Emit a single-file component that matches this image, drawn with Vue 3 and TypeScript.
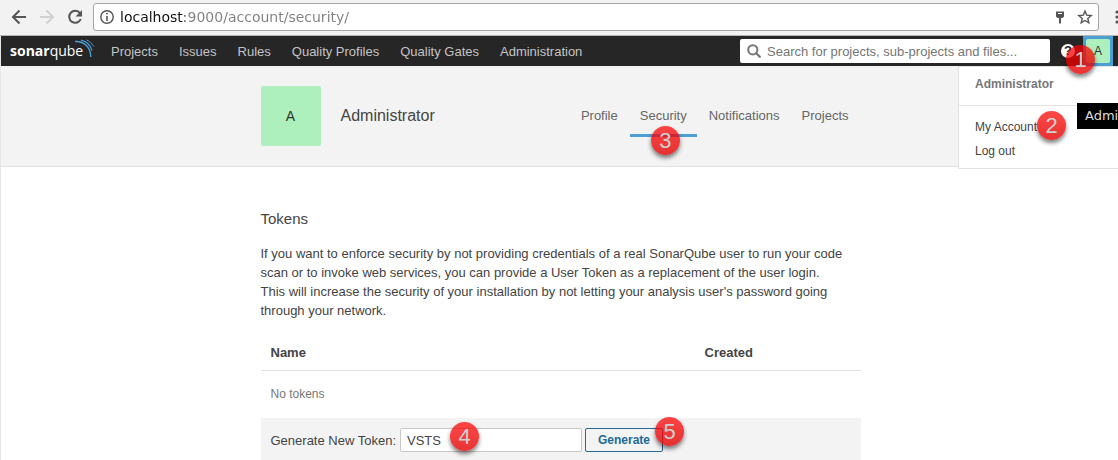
<script setup lang="ts">
import { ref } from 'vue'

interface NavLink {
  label: string
  href: string
}

const mainLinks: NavLink[] = [
  { label: 'Projects', href: '#projects' },
  { label: 'Issues', href: '#issues' },
  { label: 'Rules', href: '#rules' },
  { label: 'Quality Profiles', href: '#profiles' },
  { label: 'Quality Gates', href: '#gates' },
  { label: 'Administration', href: '#administration' },
]

const tabs: NavLink[] = [
  { label: 'Profile', href: '#profile' },
  { label: 'Security', href: '#security' },
  { label: 'Notifications', href: '#notifications' },
  { label: 'Projects', href: '#my-projects' },
]

const activeTab = ref('Security')
const address = ref('localhost:9000/account/security/')
const search = ref('')
const tokenName = ref('VSTS')
</script>

<template>
  <div class="window">
    <div class="toolbar">
      <button class="tool" type="button" aria-label="Back">
        <svg width="16" height="16" viewBox="0 0 16 16"><path d="M15 8H2M8.500 1.500L2 8l6.500 6.500" fill="none" stroke="#555" stroke-width="2" /></svg>
      </button>
      <button class="tool" type="button" aria-label="Forward" disabled>
        <svg width="16" height="16" viewBox="0 0 16 16"><path d="M1 8h13M7.500 1.500L14 8l-6.500 6.500" fill="none" stroke="#d0d0d0" stroke-width="2" /></svg>
      </button>
      <button class="tool" type="button" aria-label="Reload">
        <svg width="16" height="16" viewBox="0 0 16 16"><path d="M13 4.200A6 6 0 1 0 13.800 10" fill="none" stroke="#555" stroke-width="2" /><path d="M15 1v6.500H8.500z" fill="#555" /></svg>
      </button>
      <div class="address">
        <svg width="14" height="14" viewBox="0 0 14 14"><circle cx="7" cy="7" r="6.200" fill="none" stroke="#555" stroke-width="1.400" /><path d="M6.200 3h1.600v1.600H6.200zM6.200 6h1.600v5H6.200z" fill="#555" /></svg>
        <input v-model="address" class="url" type="text" aria-label="Address" />
        <button class="tool" type="button" aria-label="Saved passwords">
          <svg width="16" height="16" viewBox="0 0 16 16"><path d="M4 2.500h8v5L10.500 9H9v5.500H7V9H5.500L4 7.500z" fill="#555" /><path d="M6 4h4v1H6z" fill="#fff" /></svg>
        </button>
        <button class="tool" type="button" aria-label="Bookmark">
          <svg width="16" height="16" viewBox="0 0 16 16"><path d="M8 2l1.700 4.100 4.500.4-3.400 2.900 1 4.400L8 11.500l-3.800 2.300 1-4.400-3.400-2.900 4.500-.4z" fill="none" stroke="#555" stroke-width="1.400" /></svg>
        </button>
      </div>
      <button class="more" type="button" aria-label="Menu">
        <svg width="4" height="16" viewBox="0 0 4 16"><circle cx="2" cy="3" r="1.600" fill="#555" /><circle cx="2" cy="8" r="1.600" fill="#555" /><circle cx="2" cy="13" r="1.600" fill="#555" /></svg>
      </button>
    </div>

    <div class="page">
      <header class="topbar">
        <a class="logo" href="#home" aria-label="sonarqube">
          <span class="logo-text"><b>sonar</b>qube</span>
          <svg class="waves" width="20" height="20" viewBox="0 0 20 20"><g fill="none" stroke="#4b9fd5"><path d="M0 2.500C9 2 15.500 8 15.800 18" stroke-width="1.400" /><path d="M6 1.200c5.500 1.300 9.500 5 11 10.300" stroke-width="1.200" /><path d="M11.500.8c3 1.500 5.500 3.700 7.200 6.600" stroke-width="1" /></g></svg>
        </a>
        <nav class="main-nav">
          <a v-for="link in mainLinks" :key="link.label" :href="link.href">{{ link.label }}</a>
        </nav>
        <label class="search">
          <svg width="14" height="14" viewBox="0 0 14 14"><circle cx="5.800" cy="5.800" r="4.600" fill="none" stroke="#777" stroke-width="2" /><path d="M9.200 9.200l3.600 3.600" stroke="#777" stroke-width="2.200" stroke-linecap="round" /></svg>
          <input v-model="search" type="search" aria-label="Search" placeholder="Search for projects, sub-projects and files..." />
        </label>
        <button class="help" type="button" aria-label="Help">?</button>
        <div class="account">
          <button class="account-toggle" type="button"><span>A</span></button>
          <span class="badge badge-1">1</span>
          <div class="menu">
            <div class="menu-title">Administrator</div>
            <div class="menu-links">
              <a href="#account">My Account</a>
              <a href="#logout">Log out</a>
            </div>
            <span class="tooltip">Administrator</span>
            <span class="badge badge-2">2</span>
          </div>
        </div>
      </header>

      <section class="profile">
        <div class="container profile-row">
          <div class="avatar">A</div>
          <h1>Administrator</h1>
          <nav class="tabs">
            <a
              v-for="tab in tabs"
              :key="tab.label"
              :href="tab.href"
              :class="{ active: tab.label === activeTab }"
              @click="activeTab = tab.label"
            >{{ tab.label }}<span v-if="tab.label === 'Security'" class="badge badge-3">3</span></a>
          </nav>
        </div>
      </section>

      <main class="container">
        <h2>Tokens</h2>
        <p>
          If you want to enforce security by not providing credentials of a real SonarQube user to run your code
          scan or to invoke web services, you can provide a User Token as a replacement of the user login.
          This will increase the security of your installation by not letting your analysis user's password going
          through your network.
        </p>
        <table>
          <thead>
            <tr><th class="name-col">Name</th><th>Created</th></tr>
          </thead>
          <tbody>
            <tr><td colspan="2">No tokens</td></tr>
          </tbody>
        </table>
        <form class="generate" @submit.prevent>
          <label for="token-name">Generate New Token:</label>
          <div class="fields">
            <div class="anchor">
              <input id="token-name" v-model="tokenName" type="text" />
              <span class="badge badge-4">4</span>
            </div>
            <div class="anchor">
              <button type="submit">Generate</button>
              <span class="badge badge-5">5</span>
            </div>
          </div>
        </form>
      </main>
    </div>
  </div>
</template>

<style>
html,
body {
  overflow: hidden;
}

body {
  margin: 0;
  background: #fff;
}
</style>

<style scoped>
* {
  box-sizing: border-box;
}

.window {
  min-height: 100vh;
  font: 13px/19px "Liberation Sans", Arial, sans-serif;
  color: #444;
}

a {
  color: inherit;
  text-decoration: none;
}

button,
input {
  margin: 0;
  padding: 0;
  font: inherit;
  color: inherit;
}

svg {
  display: block;
  flex: none;
}

.toolbar {
  display: flex;
  align-items: center;
  height: 36px;
  padding: 0 0 2px 11px;
  gap: 12px;
  background: #f2f2f2;
  border-bottom: 1px solid #b4b6b4;
}

.tool {
  flex: none;
  border: 0;
  background: none;
}

.address {
  display: flex;
  flex: 1;
  align-items: center;
  height: 28px;
  margin-left: -2px;
  padding: 0 5px 0 6px;
  gap: 6px;
  background: #fff;
  border: 1px solid #a5a5a5;
  border-radius: 3px;
}

.address .tool + .tool {
  margin-left: 3px;
}

.url {
  flex: 1;
  min-width: 0;
  border: 0;
  outline: 0;
  font: 14px/20px "DejaVu Sans", sans-serif;
  color: transparent;
  background: linear-gradient(90deg, #111 65px, #808080 65px);
  background-clip: text;
}

.more {
  width: 7px;
  border: 0;
  background: none;
  overflow: hidden;
}

.more svg {
  margin-left: 4px;
}

.page {
  border-left: 1px solid #e6e6e6;
}

.topbar {
  display: flex;
  align-items: center;
  height: 30px;
  padding: 0 5px 0 9px;
  background: #262626;
}

.logo {
  position: relative;
  width: 101px;
  flex: none;
  color: #fff;
}

.logo-text {
  display: block;
  font: 400 14px/20px "Open Sans", sans-serif;
}

.logo-text b {
  font-weight: 700;
}

.waves {
  position: absolute;
  left: 65px;
  top: -2px;
}

.main-nav {
  display: flex;
  flex: 1;
  gap: 21px;
  color: #c4c4c4;
  white-space: nowrap;
}

.search {
  display: flex;
  align-items: center;
  width: 310px;
  height: 24px;
  padding: 0 7px;
  gap: 6px;
  background: #fff;
  border-radius: 2px;
}

.search input {
  flex: 1;
  min-width: 0;
  border: 0;
  outline: 0;
  background: none;
  appearance: none;
}

.search input::placeholder {
  color: #757575;
  opacity: 1;
}

.help {
  width: 14px;
  height: 14px;
  margin: 0 8px 0 11px;
  border: 0;
  border-radius: 50%;
  background: #fff;
  color: #262626;
  font-size: 13px;
  font-weight: 700;
  line-height: 14px;
}

.account {
  position: relative;
}

.account-toggle {
  display: block;
  width: 30px;
  height: 30px;
  padding: 3px;
  border: 0;
  background: #4b9fd5;
}

.account-toggle span {
  display: block;
  height: 24px;
  border-radius: 2px;
  background: #adf0bd;
  color: #333;
  font-size: 12px;
  line-height: 24px;
}

.menu {
  position: absolute;
  top: 30px;
  left: -125px;
  width: 160px;
  background: #fff;
  border: 1px solid #e2e2e2;
  border-right: 0;
  font-size: 12px;
}

.menu-title {
  padding: 8px 16px 11px;
  border-bottom: 1px solid #e2e2e2;
  color: #777;
  font-weight: 700;
}

.menu-links {
  padding: 9px 16px 5px;
}

.menu-links a {
  display: block;
  line-height: 24px;
}

.tooltip {
  position: absolute;
  left: 118px;
  right: 0;
  top: 36px;
  padding-left: 8px;
  overflow: hidden;
  background: #000;
  color: #ddd;
  font: 13px/26px "DejaVu Sans", sans-serif;
}

.profile {
  height: 101px;
  padding-top: 20px;
  background: #f3f3f3;
  border-bottom: 1px solid #e2e2e2;
}

.container {
  width: 600px;
  max-width: 100%;
  margin: 0 auto;
  position: relative;
  left: 1px;
}

.profile-row {
  display: flex;
  align-items: center;
}

.avatar {
  width: 60px;
  height: 60px;
  border-radius: 2px;
  background: #adf0bd;
  color: #333;
  font-size: 14px;
  line-height: 60px;
  text-align: center;
}

h1 {
  flex: 1;
  margin: 0 0 2px 20px;
  font-size: 16px;
  font-weight: 400;
}

.tabs {
  display: flex;
  gap: 2px;
  margin-right: 2px;
  color: #666;
}

.tabs a {
  position: relative;
  padding: 10px 10px 9px;
  border-bottom: 3px solid transparent;
}

.tabs .active {
  border-color: #4b9fd5;
}

h2 {
  margin: 42px 0 15px;
  font-size: 15px;
  font-weight: 400;
  line-height: 20px;
}

p {
  margin: 0 0 12px;
  padding-right: 16px;
}

table {
  width: 100%;
  border-collapse: collapse;
  text-align: left;
}

th {
  padding: 11px 10px 8px;
  border-bottom: 1px solid #e2e2e2;
}

.name-col {
  width: 434px;
}

td {
  padding: 14px 10px;
  color: #777;
  font-size: 12px;
}

.generate {
  display: flex;
  align-items: center;
  gap: 4px;
  padding: 10px;
  background: #f3f3f3;
}

.fields {
  display: flex;
  gap: 3px;
}

.anchor {
  position: relative;
}

.generate input {
  display: block;
  width: 182px;
  height: 24px;
  padding: 0 6px;
  border: 1px solid #c8c8c8;
  border-radius: 2px;
  background: #fff;
}

.generate button {
  display: block;
  height: 24px;
  padding: 0 12px;
  border: 1px solid #236a97;
  border-radius: 2px;
  background: none;
  color: #236a97;
  font-size: 12px;
  font-weight: 700;
  line-height: 22px;
}

.badge {
  position: absolute;
  width: 29px;
  height: 29px;
  border-radius: 50%;
  background: linear-gradient(rgba(255, 0, 0, 0.72), rgba(225, 0, 0, 0.8));
  box-shadow: 0 3px 4px rgba(0, 0, 0, 0.5);
  color: #d0d0d0;
  font-size: 22px;
  line-height: 29px;
  text-align: center;
}

.badge-1 {
  left: -17px;
  top: 9px;
  z-index: 1;
}

.badge-2 {
  left: 78px;
  top: 44px;
}

.badge-3 {
  left: 21px;
  top: 30px;
}

.badge-4 {
  left: 50px;
  top: -6px;
}

.badge-5 {
  right: -21px;
  top: -11px;
}
</style>
